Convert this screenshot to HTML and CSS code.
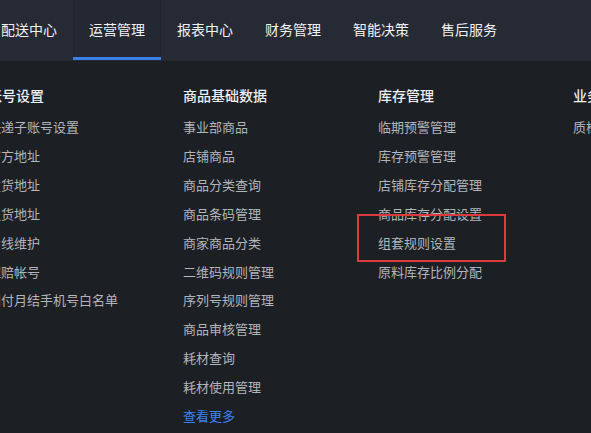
FILE: index.html
```html
<!DOCTYPE html>
<html lang="zh">
<head>
<meta charset="utf-8">
<link rel="stylesheet" href="styles.css">
</head>
<body>
<div class="page">
  <nav class="topbar">
    <a class="tab">配送中心</a>
    <a class="tab active">运营管理</a>
    <a class="tab">报表中心</a>
    <a class="tab">财务管理</a>
    <a class="tab">智能决策</a>
    <a class="tab">售后服务</a>
  </nav>
  <div class="dropdown">
    <div class="cols">
      <div class="col">
        <div class="col-title">账号设置</div>
        <ul class="items">
          <li>快递子账号设置</li>
          <li>寄方地址</li>
          <li>发货地址</li>
          <li>退货地址</li>
          <li>专线维护</li>
          <li>理赔帐号</li>
          <li>到付月结手机号白名单</li>
        </ul>
      </div>
      <div class="col">
        <div class="col-title">商品基础数据</div>
        <ul class="items">
          <li>事业部商品</li>
          <li>店铺商品</li>
          <li>商品分类查询</li>
          <li>商品条码管理</li>
          <li>商家商品分类</li>
          <li>二维码规则管理</li>
          <li>序列号规则管理</li>
          <li>商品审核管理</li>
          <li>耗材查询</li>
          <li>耗材使用管理</li>
          <li class="more">查看更多</li>
        </ul>
      </div>
      <div class="col col-stock">
        <div class="col-title">库存管理</div>
        <ul class="items">
          <li>临期预警管理</li>
          <li>库存预警管理</li>
          <li>店铺库存分配管理</li>
          <li>商品库存分配设置</li>
          <li>组套规则设置</li>
          <li>原料库存比例分配</li>
        </ul>
        <div class="highlight"></div>
      </div>
      <div class="col">
        <div class="col-title">业务设置</div>
        <ul class="items">
          <li>质检管理</li>
        </ul>
      </div>
    </div>
  </div>
</div>
</body>
</html>
```

FILE: styles.css
```css
* { box-sizing: border-box; }
html, body {
  margin: 0;
  padding: 0;
  background: #1c1f24;
}
body {
  font-family: "Noto Sans CJK SC", "Noto Sans", sans-serif;
  width: 591px;
  height: 433px;
  overflow: hidden;
}
.page {
  width: 591px;
  height: 433px;
  overflow: hidden;
}
.topbar {
  display: flex;
  height: 61px;
  margin-left: -15px;
  background: #262a34;
  border-bottom: 1px solid #23272f;
}
.tab {
  flex: 0 0 88px;
  height: 60px;
  display: flex;
  align-items: center;
  justify-content: center;
  color: #f0f1f3;
  font-size: 14px;
  border-bottom: 3px solid transparent;
  white-space: nowrap;
}
.tab.active {
  background: #242833;
  border-bottom-color: #3c7fe6;
  box-shadow: inset 1px 0 0 #20242c, inset -1px 0 0 #20242c;
}
.dropdown {
  height: 372px;
  background: #1c1f24;
}
.cols {
  display: flex;
  margin-left: -12px;
}
.col {
  flex: 0 0 195px;
  padding-top: 24px;
  position: relative;
  white-space: nowrap;
}
.col-title {
  font-size: 14px;
  line-height: 20px;
  color: #eceef0;
  font-weight: 500;
  margin-bottom: 8px;
}
.items {
  list-style: none;
  margin: 0;
  padding: 0;
}
.items li {
  font-size: 13px;
  line-height: 28.9px;
  color: #b2b5ba;
}
.items li.more {
  color: #3b82f0;
}
.highlight {
  position: absolute;
  left: -21px;
  top: 153px;
  width: 149px;
  height: 48px;
  border: 2.5px solid #dc3a3e;
  pointer-events: none;
}
```
